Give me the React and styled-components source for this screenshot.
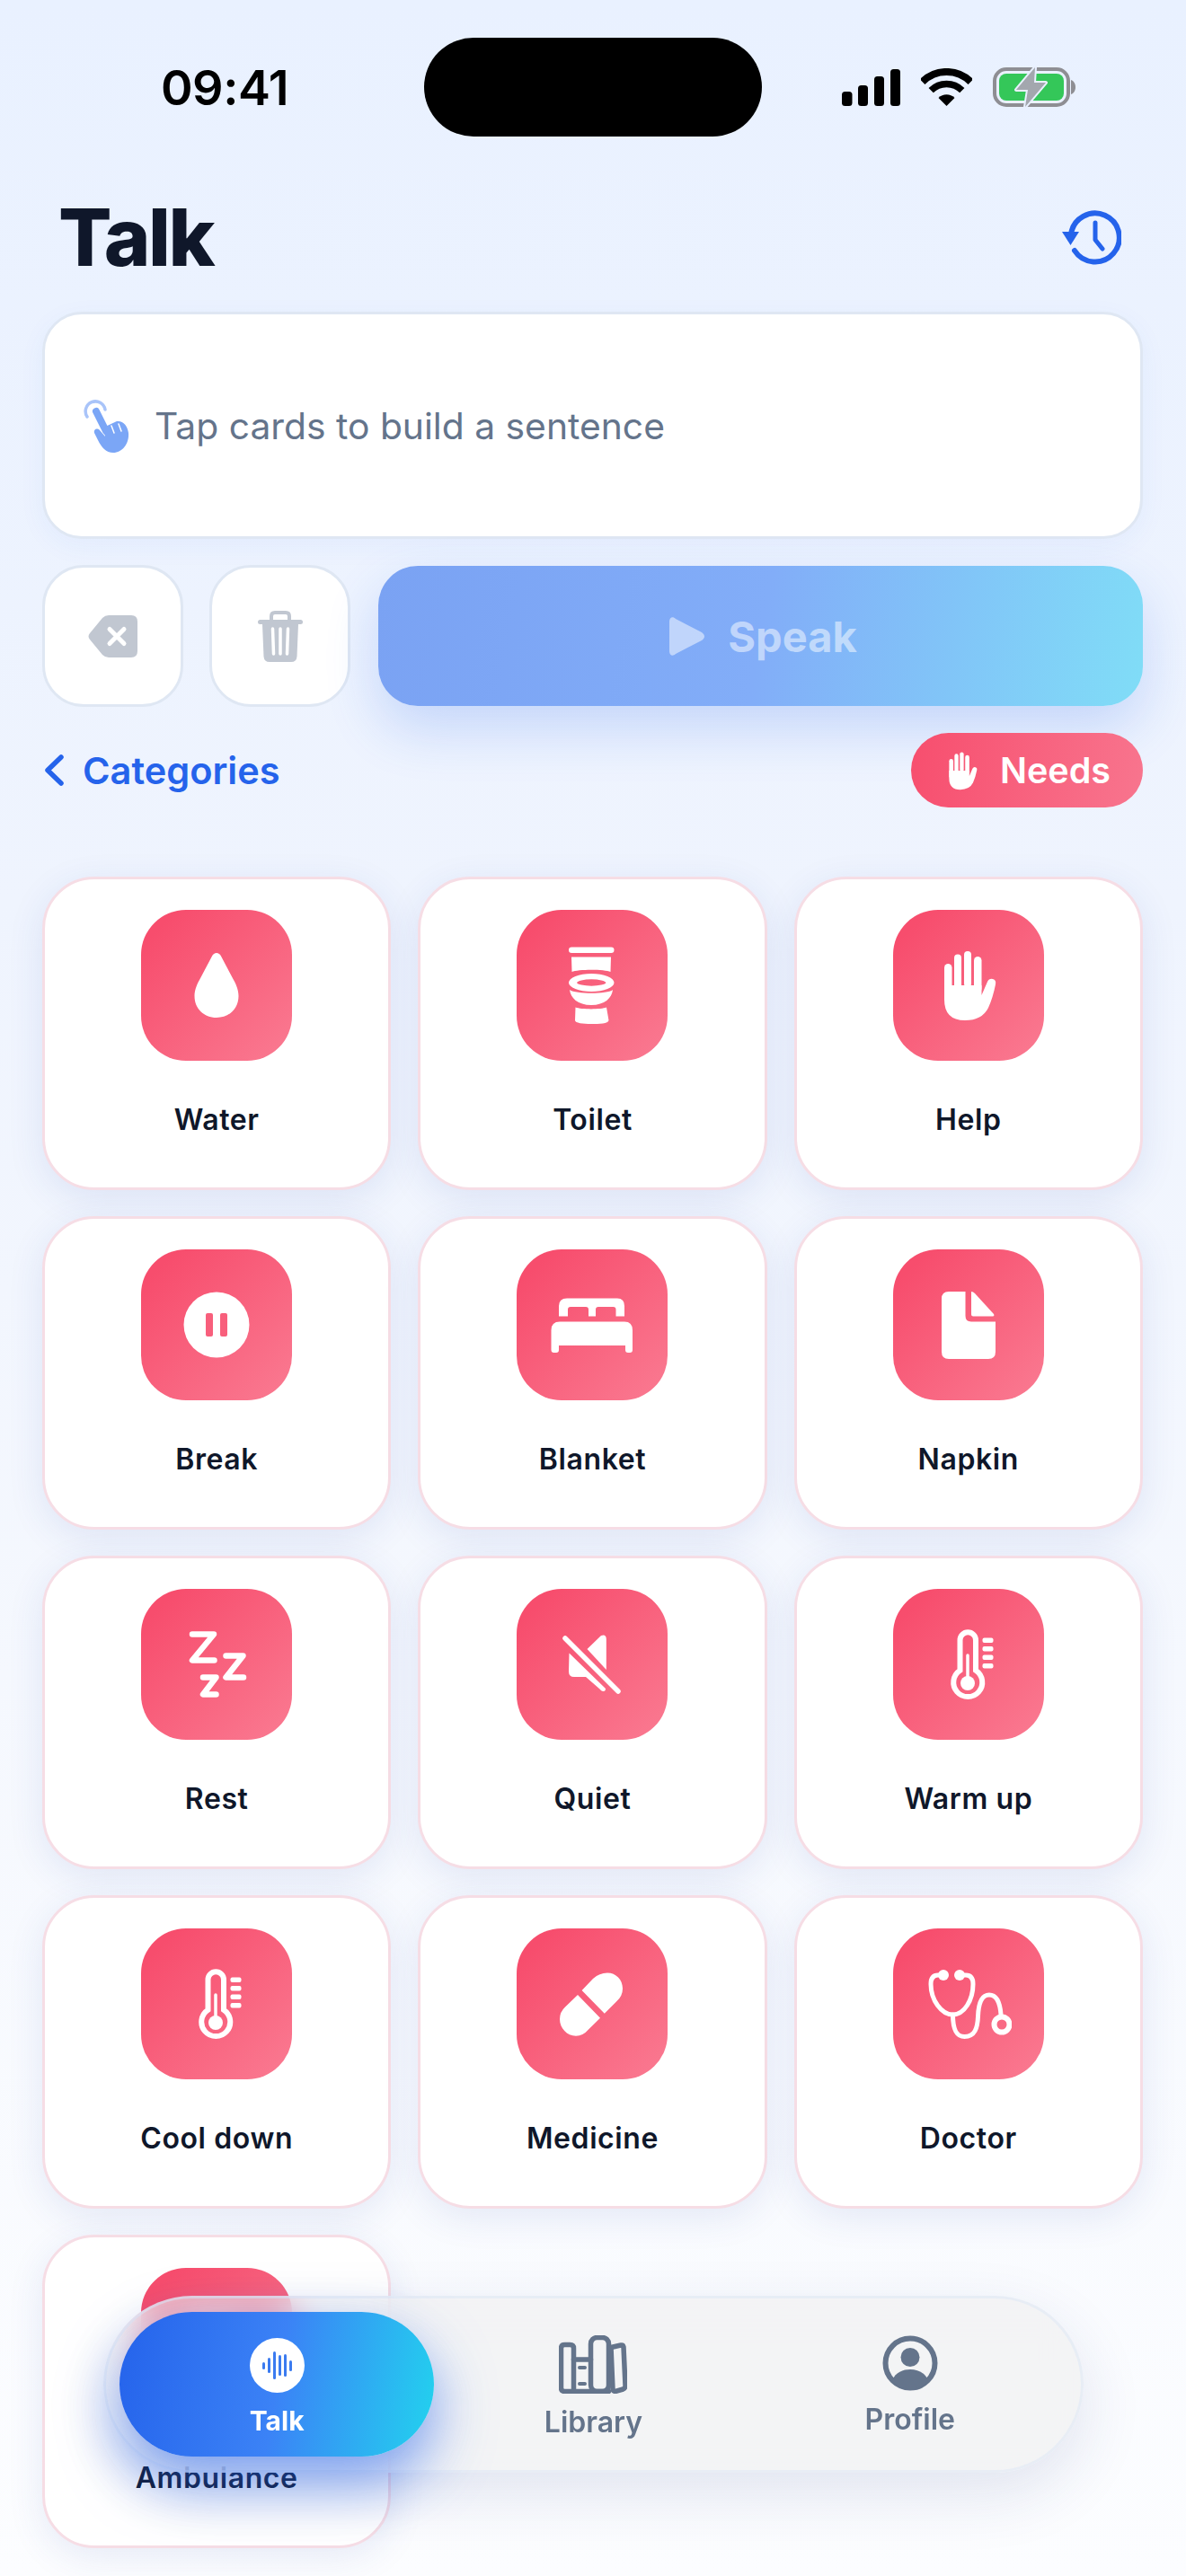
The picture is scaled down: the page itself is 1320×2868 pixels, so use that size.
import React from 'react';
import styled, { createGlobalStyle } from 'styled-components';
import { Ambulance } from 'lucide-react';

const GlobalStyle = createGlobalStyle`
  html, body {
    margin: 0;
    padding: 0;
    background: #f5f8fe;
  }
  * {
    box-sizing: border-box;
  }
`;

const Page = styled.div`
  position: relative;
  width: 1320px;
  height: 2868px;
  overflow: hidden;
  padding: 42px 48px 0 47px;
  font-family: Inter, "Noto Sans", sans-serif;
  color: #0f172a;
  background: linear-gradient(180deg, #e9f1ff 0%, #eff4fe 35%, #f5f8fe 65%, #fcfdff 100%);
`;

const StatusBar = styled.div`
  display: grid;
  grid-template-columns: 425px 376px 1fr;
  height: 110px;
  margin-right: -48px;
  align-items: center;
`;

const Clock = styled.div`
  padding-left: 132px;
  font-size: 54px;
  font-weight: 600;
  letter-spacing: -0.5px;
  color: #000;
`;

const Island = styled.div`
  height: 110px;
  border-radius: 55px;
  background: #000;
`;

const StatusIcons = styled.div`
  display: flex;
  align-items: center;
  padding-left: 89px;
  gap: 23px;
`;

const Header = styled.header`
  display: flex;
  align-items: center;
  justify-content: space-between;
  height: 195px;
  padding: 29px 24px 0 18px;
`;

const Title = styled.h1`
  margin: 0;
  font-size: 88px;
  line-height: 88px;
  font-weight: 800;
  letter-spacing: -2.4px;
  color: #0f172a;
`;

const Composer = styled.div`
  display: flex;
  align-items: center;
  gap: 28px;
  height: 253px;
  padding: 0 0 0 43px;
  background: #fff;
  border: 3px solid #dfe7f3;
  border-radius: 44px;
  box-shadow: 0 8px 30px rgba(37, 99, 235, 0.05);
`;

const Placeholder = styled.span`
  font-size: 40.8px;
  color: #64748b;
`;

const Actions = styled.div`
  display: grid;
  grid-template-columns: 157px 157px 1fr;
  align-items: center;
  gap: 29px;
  height: 158px;
  margin-top: 29px;
`;

const IconButton = styled.button`
  display: flex;
  align-items: center;
  justify-content: center;
  height: 158px;
  padding: 0;
  background: #fff;
  border: 3px solid #dfe7f3;
  border-radius: 46px;
`;

const SpeakButton = styled.button`
  display: flex;
  align-items: center;
  justify-content: center;
  gap: 26px;
  height: 156px;
  margin-left: 2px;
  padding: 0 0 0 6px;
  border: 0;
  border-radius: 44px;
  font-family: inherit;
  font-size: 47px;
  font-weight: 700;
  color: rgba(255, 255, 255, 0.5);
  background: linear-gradient(100deg, #7aa2f3 0%, #82adf8 50%, #80ddf7 100%);
  box-shadow: 0 26px 60px rgba(37, 99, 235, 0.2);
`;

const CategoryRow = styled.div`
  display: flex;
  align-items: center;
  justify-content: space-between;
  height: 83px;
  margin-top: 29px;
`;

const BackLink = styled.a`
  display: flex;
  align-items: center;
  gap: 21px;
  padding-left: 3px;
  font-size: 41.500px;
  font-weight: 600;
  color: #2563eb;
`;

const CategoryPill = styled.div`
  display: flex;
  align-items: center;
  gap: 16px;
  height: 83px;
  padding: 0 36px 0 31px;
  border-radius: 42px;
  font-size: 39.500px;
  font-weight: 600;
  color: #fff;
  background: linear-gradient(100deg, #f74e6e 0%, #f8758e 100%);
`;

const CardGrid = styled.div`
  display: grid;
  grid-template-columns: repeat(3, 1fr);
  grid-auto-rows: 349px;
  gap: 29px 30px;
  margin-top: 77px;
`;

const Card = styled.div`
  display: flex;
  flex-direction: column;
  align-items: center;
  padding-top: 34px;
  background: #fff;
  border: 3px solid #f6dde5;
  border-radius: 58px;
  box-shadow: 0 10px 40px rgba(37, 70, 170, 0.1);
`;

const Tile = styled.div`
  display: flex;
  align-items: center;
  justify-content: center;
  width: 168px;
  height: 168px;
  border-radius: 50px;
  color: #fff;
  background: linear-gradient(135deg, #f74d6d 12%, #fa7b92 100%);
`;

const CardLabel = styled.div`
  margin-top: 46px;
  font-size: 32px;
  line-height: 40px;
  font-weight: 600;
  letter-spacing: 0.6px;
  color: #0f172a;
`;

const TabBar = styled.nav`
  position: absolute;
  left: 115px;
  top: 2556px;
  display: grid;
  grid-template-columns: repeat(3, 1fr);
  gap: 2px;
  width: 1091px;
  height: 197px;
  padding: 15px;
  border: 3px solid rgba(224, 232, 245, 0.6);
  border-radius: 99px;
  background: rgba(238, 238, 238, 0.58);
  backdrop-filter: blur(20px);
  box-shadow: 0 24px 70px rgba(30, 50, 120, 0.12);
`;

const Tab = styled.div`
  display: flex;
  flex-direction: column;
  align-items: center;
  gap: ${(p) => (p.$active ? '13px' : '14px')};
  padding-top: ${(p) => (p.$active ? '29px' : '26px')};
  border-radius: 81px;
  font-size: ${(p) => (p.$active ? '30px' : '32px')};
  line-height: 36px;
  font-weight: ${(p) => (p.$active ? 700 : 600)};
  color: ${(p) => (p.$active ? '#fff' : '#64748b')};
  background: ${(p) => (p.$active ? 'linear-gradient(100deg, #2563eb 0%, #3b82f6 50%, #22d3ee 100%)' : 'transparent')};
  box-shadow: ${(p) => (p.$active ? '0 28px 64px rgba(37, 99, 235, 0.6)' : 'none')};
`;

const VoiceBadge = styled.div`
  display: flex;
  align-items: center;
  justify-content: center;
  gap: 3px;
  width: 61px;
  height: 61px;
  border-radius: 50%;
  background: #fff;
`;

const VoiceBar = styled.span`
  width: 3px;
  border-radius: 2px;
  background: #3b7bf0;
`;

const Signal = () => (
  <svg width="65" height="41" viewBox="0 0 65 41">
    <rect x="0" y="25" width="11.5" height="16" rx="3.5" />
    <rect x="18" y="18" width="11" height="23" rx="3.5" />
    <rect x="36" y="8" width="11" height="33" rx="3.5" />
    <rect x="54" y="0" width="11" height="41" rx="3.5" />
  </svg>
);

const Wifi = () => (
  <svg width="57" height="42" viewBox="0 0 57 42" fill="none" stroke="#000">
    <path d="M1.6 15.1A38 38 0 0 1 55.4 15.1" strokeWidth="8" />
    <path d="M11.2 24.7A24.5 24.5 0 0 1 45.8 24.7" strokeWidth="7.5" />
    <path d="M28.5 42L19.5 33A12.7 12.7 0 0 1 37.5 33Z" fill="#000" stroke="none" />
  </svg>
);

const Battery = () => (
  <svg width="92" height="46" viewBox="0 0 92 46" fill="none">
    <rect x="2" y="3" width="82" height="40" rx="13" stroke="#8e8e93" strokeWidth="4" />
    <rect x="7" y="8" width="72" height="30" rx="8" fill="#34c759" />
    <path d="M87 15C90 16 92 19 92 23C92 27 90 30 87 31Z" fill="#8e8e93" />
    <path d="M47 1L26 26H39L36 45L59 18H46Z" fill="#a3a7ae" stroke="#e9f0fe" strokeWidth="4" strokeLinejoin="round" paintOrder="stroke" />
  </svg>
);

const HistoryIcon = () => (
  <svg width="66" height="62" viewBox="0 0 66 62" fill="none" stroke="#2563eb" strokeWidth="6" strokeLinecap="round" strokeLinejoin="round">
    <path d="M10 28A27 27 0 1 1 14 46" />
    <path d="M37 15V34L45 44" strokeWidth="5" />
    <path d="M0 25H19L9.5 40Z" fill="#2563eb" stroke="none" />
  </svg>
);

const TapIcon = () => (
  <svg width="51" height="60" viewBox="0 0 51 60" fill="none" strokeLinecap="round">
    <path d="M4 20A11 11 0 1 1 24 12" stroke="#a9c4f9" strokeWidth="3.5" />
    <path d="M14 14L25 36" stroke="#7ba6f6" strokeWidth="8" />
    <path d="M22 32L37 25C44 24 49 30 50 38C51 50 43 60 33 60C25 60 20 54 16 46L12 38C11 34 15 32 18 35L24 42Z" fill="#7ba6f6" />
    <path d="M31 30L34 38M39 28L42 36" stroke="#fff" strokeWidth="1.5" />
  </svg>
);

const BackspaceIcon = () => (
  <svg width="55" height="47" viewBox="0 0 55 47">
    <path d="M23 0H48Q55 0 55 7V40Q55 47 48 47H23Q19 47 16 44L2 27Q-1 23.500 2 20L16 3Q19 0 23 0Z" fill="#c1c7d1" />
    <path d="M24 15.500L40 31.500M40 15.500L24 31.500" stroke="#fff" strokeWidth="5" strokeLinecap="round" />
  </svg>
);

const TrashIcon = () => (
  <svg width="50" height="57" viewBox="0 0 50 57" fill="none">
    <path d="M15 11V6Q15 2 19 2H31Q35 2 35 6V11" stroke="#c1c7d1" strokeWidth="4" />
    <rect x="0" y="10" width="50" height="5" rx="2.500" fill="#c1c7d1" />
    <path d="M5 15H45L43.500 51Q43 57 37 57H13Q7 57 6.500 51Z" fill="#c1c7d1" />
    <path d="M16.500 20L17.500 48M25 20V48M33.500 20L32.500 48" stroke="#fff" strokeWidth="3.500" strokeLinecap="round" />
  </svg>
);

const PlayIcon = () => (
  <svg width="39" height="43" viewBox="0 0 39 43">
    <path d="M0 5C0 0 4 -1 7 2L36 17C40 20 40 23 36 26L7 41C4 44 0 43 0 38Z" fill="rgba(255,255,255,0.5)" />
  </svg>
);

const Chevron = () => (
  <svg width="21" height="35" viewBox="0 0 21 35" fill="none" stroke="#2563eb" strokeWidth="5.500" strokeLinecap="round" strokeLinejoin="round">
    <path d="M18 3L3 17.500L18 32" />
  </svg>
);

const HandPath = () => (
  <>
    <rect x="21" y="24" width="8.500" height="40" rx="4.250" />
    <rect x="32" y="13.500" width="8" height="40" rx="4" />
    <rect x="43" y="10" width="8" height="40" rx="4" />
    <rect x="54" y="16" width="8.500" height="40" rx="4.250" />
    <path d="M21 48H62.500V59L69 44Q71 40 75 41Q79 42 78 47Q75 62 70 73Q63 87 44 87Q21 87 21 64Z" />
  </>
);

const DropIcon = () => (
  <svg width="96" height="96" viewBox="0 0 96 96" fill="#fff">
    <path d="M48 12C46 12 44 13.500 43 15.500L29 42C25 49 23.500 55 23.500 60C23.500 74 34 84 48 84S72.500 74 72.500 60C72.500 55 71 49 67 42L53 15.500C52 13.500 50 12 48 12Z" />
  </svg>
);

const ToiletIcon = () => (
  <svg width="96" height="96" viewBox="0 0 96 96" fill="#fff">
    <rect x="22" y="5.500" width="50.500" height="6.500" rx="3.250" />
    <path d="M25 16.500H69L68.500 33C62 30 32 30 25.500 33Z" />
    <path fillRule="evenodd" d="M22 45A25.200 10 0 0 1 72.500 45A25.200 10 0 0 1 22 45ZM31 45A16.300 4 0 0 0 63.500 45A16.300 4 0 0 0 31 45Z" />
    <path d="M23 53C30 58 65 58 71 53C70 62 62 70 47 70C32 70 24 62 23 53Z" />
    <path d="M29.500 72.500C36 75 58 75 64 72.500L66.500 87C66 91 56 91 47 91C38 91 29 90 29 87Z" />
  </svg>
);

const HandIcon = ({ size = 96 }) => (
  <svg width={size} height={size} viewBox="0 0 96 96" fill="#fff">
    <HandPath />
  </svg>
);

const PauseIcon = () => (
  <svg width="96" height="96" viewBox="0 0 96 96">
    <circle cx="48" cy="48" r="36.500" fill="#fff" />
    <rect x="36" y="35" width="8" height="26" rx="2" fill="#f85f7c" />
    <rect x="52" y="35" width="8" height="26" rx="2" fill="#f85f7c" />
  </svg>
);

const BedIcon = () => (
  <svg width="96" height="96" viewBox="0 0 96 96" fill="#fff">
    <path d="M11 38.500V27Q11 18.500 20 18.500H76Q84 18.500 84 27V38.500H74.500V31Q74.500 28 71.500 28H55Q52 28 52 31V38.500H44V31Q44 28 41 28H24Q21 28 21 31V38.500Z" />
    <path d="M12 44.500H84Q93 44.500 93 54V76Q93 79 90 79H88Q85 79 85 76V71H11V76Q11 79 8 79H5.500Q2.500 79 2.500 76V54Q2.500 44.500 12 44.500Z" />
  </svg>
);

const FileIcon = () => (
  <svg width="96" height="96" viewBox="0 0 96 96" fill="#fff">
    <path d="M26 11H44.500V38Q44.500 44.500 51 44.500H78V78Q78 86 70 86H26Q18 86 18 78V19Q18 11 26 11Z" />
    <path d="M51 11Q53 11 55 13L76 36Q77 38.500 75 38.500H53Q51 38.500 51 36.500Z" />
  </svg>
);

const SleepIcon = () => (
  <svg width="96" height="96" viewBox="0 0 96 96" fill="none" stroke="#fff" strokeWidth="6.500" strokeLinecap="round" strokeLinejoin="round">
    <path d="M21 14.500H45L21 43.500H45.500" />
    <path d="M58.500 38.500H77.500L58.500 62.500H78" />
    <path d="M33 62.500H47.500L33 81.500H47.500" />
  </svg>
);

const MuteIcon = () => (
  <svg width="96" height="96" viewBox="0 0 96 96" fill="#fff">
    <path d="M58 16Q63.800 14 63.800 20V54L42.500 31Z" />
    <path d="M22.500 35.500L63 75Q63 78.500 60 78Q58 77.500 56.500 75.500L41 62H28Q22 62 22 56Z" />
    <path d="M18 19L77 78" stroke="#fff" strokeWidth="5.500" strokeLinecap="round" />
  </svg>
);

const ThermoIcon = () => (
  <svg width="96" height="96" viewBox="0 0 96 96" fill="none" stroke="#fff">
    <path d="M38.500 54.700V21A8.750 8.750 0 0 1 56 21V54.700A16 16 0 1 1 38.500 54.700Z" strokeWidth="6" />
    <path d="M47 38V62" strokeWidth="3.500" strokeLinecap="round" />
    <circle cx="47" cy="69" r="8" fill="#fff" stroke="none" />
    <g fill="#fff" stroke="none">
      <rect x="63.500" y="18.500" width="12" height="5.500" rx="2" />
      <rect x="63.500" y="28" width="12" height="5.500" rx="2" />
      <rect x="63.500" y="37.500" width="12" height="5.500" rx="2" />
      <rect x="63.500" y="47" width="12" height="5.500" rx="2" />
    </g>
  </svg>
);

const PillIcon = () => (
  <svg width="96" height="96" viewBox="0 0 96 96" fill="#fff">
    <path d="M36.600 33L49 20Q56 13.500 65 13.500C74.500 13.500 82 21 82 31Q82 39.500 75 45.500L61.800 58.700Z" />
    <path d="M32 38L57 63.700L44 76.500Q38 83.700 30 83.700C20 83.700 12 75 12 65Q12 57 18 51.500Z" />
  </svg>
);

const StethoscopeIcon = () => (
  <svg width="96" height="96" viewBox="0 0 96 96" fill="none" stroke="#fff" strokeWidth="5" strokeLinecap="round">
    <path d="M19 16H14Q6 16 6 26C6 44 18 60 30.500 60C43 60 53 44 53 26Q53 16 45 16H40" />
    <path d="M30.500 60C30.500 76 34 84.500 43.500 84.500C55 84.500 58 75 58.500 62C59 48 62 38 71 38C79 38 83 46 84 60" />
    <circle cx="20" cy="16" r="6" fill="#fff" stroke="none" />
    <circle cx="38" cy="16" r="6" fill="#fff" stroke="none" />
    <circle cx="85" cy="71" r="8.500" strokeWidth="6" />
  </svg>
);

const LibraryIcon = () => (
  <svg width="76" height="65" viewBox="0 0 76 65" fill="none" stroke="#64748b" strokeWidth="5.500" strokeLinecap="round" strokeLinejoin="round">
    <path d="M16.500 62.500H6.500Q2.500 62.500 2.500 58.500V14.500Q2.500 10.500 6.500 10.500H12.500Q16.500 10.500 16.500 14.500Z" />
    <path d="M16.500 27H35.500M16.500 62.500H55.500" />
    <rect x="35.500" y="2.500" width="20" height="60" rx="7" />
    <path d="M58 13.500L69 11Q71.500 10.500 72 13L74 56Q74 59 71.500 60L63 62.500Q60.500 62.500 60 60Z" />
    <path d="M23 36H29M23 54H29" strokeWidth="4" />
  </svg>
);

const ProfileIcon = () => (
  <svg width="62" height="62" viewBox="0 0 62 62" fill="#64748b">
    <circle cx="31" cy="31" r="27.500" fill="none" stroke="#64748b" strokeWidth="6" />
    <circle cx="31" cy="24.500" r="10.500" />
    <path d="M11 50C15 41 23 38 31 38C39 38 47 41 51 50C46 57 38 60 31 60C24 60 16 57 11 50Z" />
  </svg>
);

const cards = [
  { label: 'Water', icon: <DropIcon /> },
  { label: 'Toilet', icon: <ToiletIcon /> },
  { label: 'Help', icon: <HandIcon /> },
  { label: 'Break', icon: <PauseIcon /> },
  { label: 'Blanket', icon: <BedIcon /> },
  { label: 'Napkin', icon: <FileIcon /> },
  { label: 'Rest', icon: <SleepIcon /> },
  { label: 'Quiet', icon: <MuteIcon /> },
  { label: 'Warm up', icon: <ThermoIcon /> },
  { label: 'Cool down', icon: <ThermoIcon /> },
  { label: 'Medicine', icon: <PillIcon /> },
  { label: 'Doctor', icon: <StethoscopeIcon /> },
  { label: 'Ambulance', icon: <Ambulance size={80} strokeWidth={2} /> },
];

const voiceBars = [8, 17, 31, 23, 25, 12];

const App = () => (
  <Page>
    <GlobalStyle />
    <StatusBar>
      <Clock>09:41</Clock>
      <Island />
      <StatusIcons>
        <Signal />
        <Wifi />
        <Battery />
      </StatusIcons>
    </StatusBar>

    <Header>
      <Title>Talk</Title>
      <HistoryIcon />
    </Header>

    <Composer>
      <TapIcon />
      <Placeholder>Tap cards to build a sentence</Placeholder>
    </Composer>

    <Actions>
      <IconButton><BackspaceIcon /></IconButton>
      <IconButton><TrashIcon /></IconButton>
      <SpeakButton><PlayIcon />Speak</SpeakButton>
    </Actions>

    <CategoryRow>
      <BackLink><Chevron />Categories</BackLink>
      <CategoryPill><HandIcon size={52} />Needs</CategoryPill>
    </CategoryRow>

    <CardGrid>
      {cards.map((card) => (
        <Card key={card.label}>
          <Tile>{card.icon}</Tile>
          <CardLabel>{card.label}</CardLabel>
        </Card>
      ))}
    </CardGrid>

    <TabBar>
      <Tab $active>
        <VoiceBadge>
          {voiceBars.map((h, i) => (
            <VoiceBar key={i} style={{ height: h }} />
          ))}
        </VoiceBadge>
        Talk
      </Tab>
      <Tab><LibraryIcon />Library</Tab>
      <Tab><ProfileIcon />Profile</Tab>
    </TabBar>
  </Page>
);

export default App;
